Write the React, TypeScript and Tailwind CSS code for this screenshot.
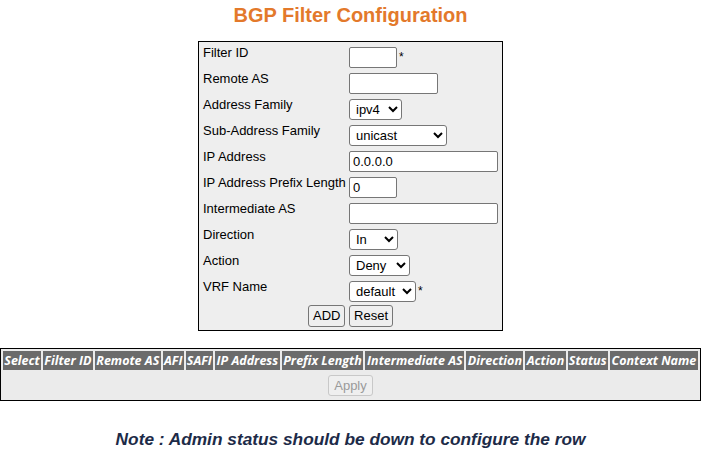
import React from 'react';

const rows: { label: string; field: React.ReactNode }[] = [
  { label: 'Filter ID', field: <><input className="inp w-[48px]" /><span className="ml-0.5 align-top text-[12px]">*</span></> },
  { label: 'Remote AS', field: <input className="inp w-[89px]" /> },
  { label: 'Address Family', field: <select className="sel w-[53px]"><option>ipv4</option></select> },
  { label: 'Sub-Address Family', field: <select className="sel w-[98px]"><option>unicast</option></select> },
  { label: 'IP Address', field: <input className="inp w-[149px]" defaultValue="0.0.0.0" /> },
  { label: 'IP Address Prefix Length', field: <input className="inp w-[48px]" defaultValue="0" /> },
  { label: 'Intermediate AS', field: <input className="inp w-[149px]" /> },
  { label: 'Direction', field: <select className="sel w-[49px]"><option>In</option></select> },
  { label: 'Action', field: <select className="sel w-[61px]"><option>Deny</option></select> },
  { label: 'VRF Name', field: <><select className="sel w-[67px]"><option>default</option></select><span className="ml-0.5 align-top text-[12px]">*</span></> },
];

const cols = ['Select', 'Filter ID', 'Remote AS', 'AFI', 'SAFI', 'IP Address', 'Prefix Length', 'Intermediate AS', 'Direction', 'Action', 'Status', 'Context Name'];

export default function App() {
  return (
    <div className="w-[706px] h-[456px] bg-white font-['Liberation_Sans',Arial,sans-serif] text-[13px] text-black">
      <style>{`
        .inp { height: 21px; border: 1px solid #767676; border-radius: 2px; padding: 1px 3px; font-size: 13px; background: #fff; vertical-align: bottom; }
        .sel { height: 21px; border: 1px solid #767676; border-radius: 3px; padding: 0 2px; font-size: 13px; background: #fff; appearance: auto; vertical-align: bottom; }
        .btn { height: 22px; padding: 0 4px; border: 1px solid #767676; border-radius: 3px; background: #efefef; font-size: 13px; }
      `}</style>
      <div className="w-[701px]">
        <h1 className="text-center text-[20px] leading-[24px] font-bold text-[#e3792b] pt-[3px] h-[41px]">BGP Filter Configuration</h1>

        {/* Form */}
        <table className="mx-auto border border-black bg-[#eeeeee] w-[305px] border-separate border-spacing-[2px] px-[2px]">
          <tbody>
            {rows.map(r => (
              <tr key={r.label} className="h-[24px]">
                <td className="align-top p-0 pt-[1px] leading-[15px] w-[146px] whitespace-nowrap">{r.label}</td>
                <td className="align-bottom p-0 leading-[21px]">{r.field}</td>
              </tr>
            ))}
            <tr>
              <td colSpan={2} className="text-center p-0 pt-[1px] pb-[1px]">
                <button className="btn">ADD</button>{' '}
                <button className="btn">Reset</button>
              </td>
            </tr>
          </tbody>
        </table>

        {/* List table */}
        <table className="mt-[17px] w-[701px] border border-black bg-[#ebebeb] border-separate border-spacing-[2px]">
          <thead>
            <tr>
              {cols.map(c => (
                <th key={c} className="bg-[#6b6b6b] text-white font-bold italic text-[12.5px] leading-[17px] px-[1px] h-[19px] font-['Open_Sans',sans-serif] whitespace-nowrap">{c}</th>
              ))}
            </tr>
          </thead>
          <tbody>
            <tr>
              <td colSpan={12} className="text-center h-[26px] p-0">
                <button className="h-[21px] px-[5px] border border-[#c8c8c8] rounded-[3px] bg-[#efefef] text-[#9a9a9a] text-[13px]">Apply</button>
              </td>
            </tr>
          </tbody>
        </table>

        <p className="mt-[28px] text-center text-[17.3px] leading-[20px] font-bold italic text-[#1d2b48]">Note : Admin status should be down to configure the row</p>
      </div>
    </div>
  );
}
